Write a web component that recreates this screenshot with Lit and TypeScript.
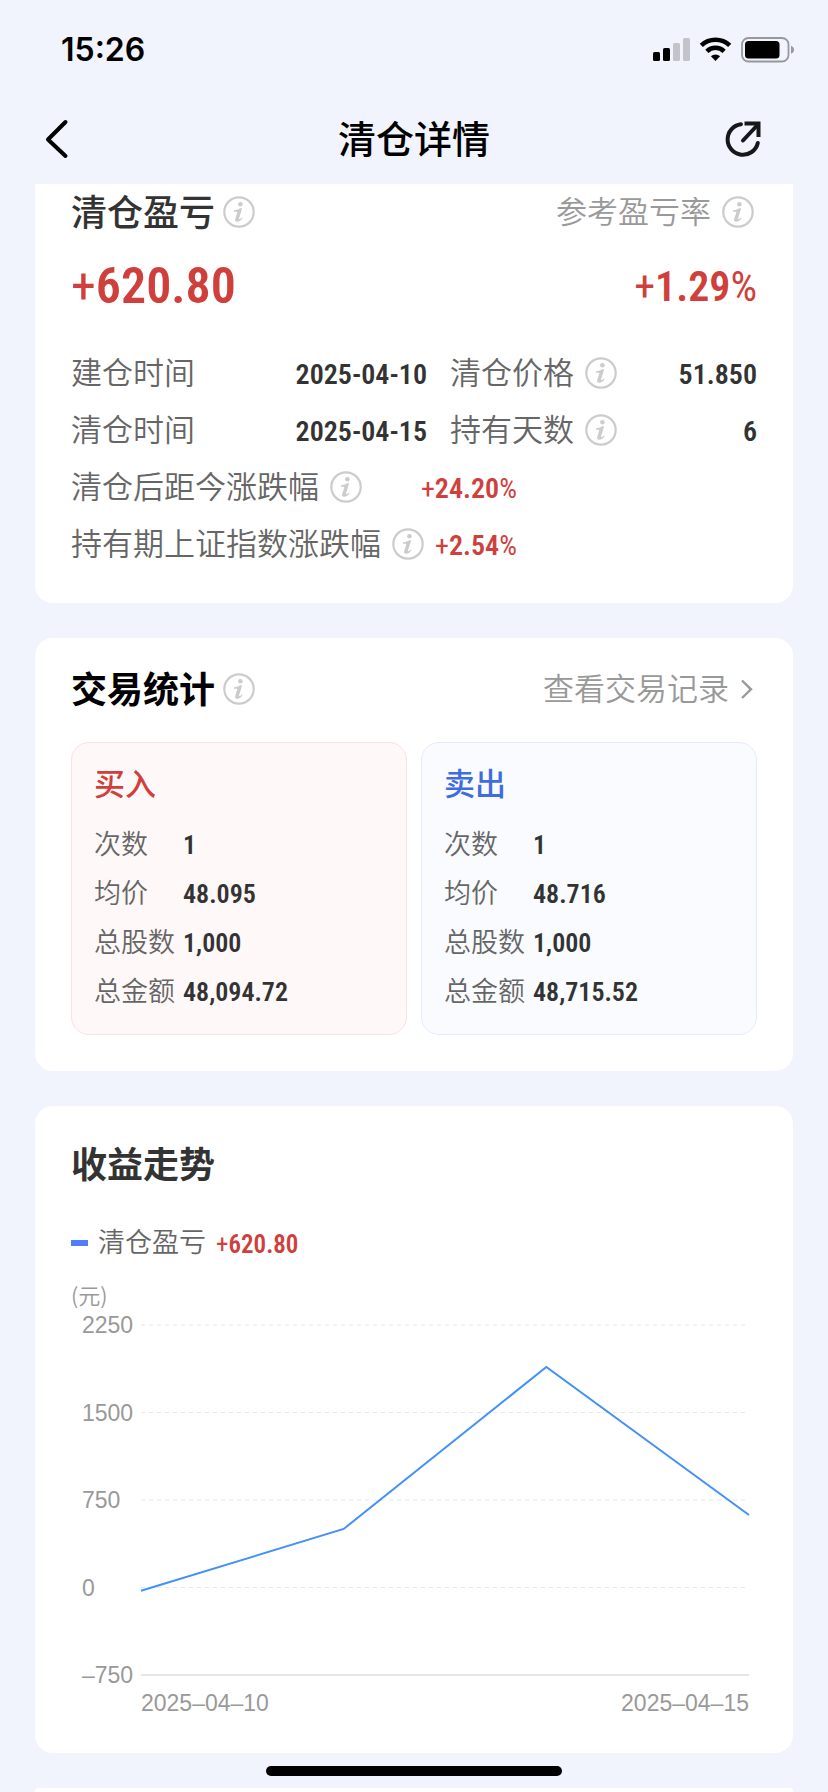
import { LitElement, html, css, svg, nothing } from "lit";
import { customElement, property } from "lit/decorators.js";

type Entry = { label: string; value: string; info?: boolean };

const POSITION_ENTRIES: Entry[] = [
  { label: "建仓时间", value: "2025-04-10" },
  { label: "清仓价格", value: "51.850", info: true },
  { label: "清仓时间", value: "2025-04-15" },
  { label: "持有天数", value: "6", info: true },
];

const CHANGE_ENTRIES: Entry[] = [
  { label: "清仓后距今涨跌幅", value: "+24.20%", info: true },
  { label: "持有期上证指数涨跌幅", value: "+2.54%", info: true },
];

const BUY_ENTRIES: Entry[] = [
  { label: "次数", value: "1" },
  { label: "均价", value: "48.095" },
  { label: "总股数", value: "1,000" },
  { label: "总金额", value: "48,094.72" },
];

const SELL_ENTRIES: Entry[] = [
  { label: "次数", value: "1" },
  { label: "均价", value: "48.716" },
  { label: "总股数", value: "1,000" },
  { label: "总金额", value: "48,715.52" },
];

const CHART_MAX = 2250;
const CHART_MIN = -750;
const CHART_TICKS = [2250, 1500, 750, 0, -750];
const CHART_VALUES = [-28, 502, 1890, 621];

@customElement("info-button")
class InfoButton extends LitElement {
  @property() topic = "";

  static styles = css`
    :host {
      display: flex;
    }
    .info {
      display: flex;
      margin: 0;
      padding: 0;
      border: 0;
      background: none;
      color: #cccccc;
    }
    .icon {
      display: block;
      width: 32px;
      height: 32px;
    }
  `;

  render() {
    return html`
      <button class="info" type="button" aria-label="${this.topic}说明">
        <svg class="icon" viewBox="0 0 32 32" aria-hidden="true">
          <circle cx="16" cy="16" r="14.7" fill="none" stroke="currentColor" stroke-width="2.2" />
          <circle cx="17.4" cy="8.2" r="2.3" fill="currentColor" />
          <path
            d="M11 14.300c2.600-.4 4.800-1.200 7-2.400l1.100.6-3 9.700c-.2.8.1 1.100.7.9.8-.3 1.500-.9 2.100-1.600l.8.6c-1.400 2.200-3.300 3.700-5.600 3.700-1.700 0-2.400-1.100-1.900-2.800l2-6.200c.2-.8 0-1.100-.8-1.100l-2.400.1z"
            fill="currentColor"
          />
        </svg>
      </button>
    `;
  }
}

/** A figure whose plus and percent signs are drawn thinner than its digits. */
@customElement("signed-figure")
class SignedFigure extends LitElement {
  @property() value = "";

  static styles = css`
    .thin {
      font-weight: 400;
    }
  `;

  render() {
    const parts = this.value.split(/([+%])/).filter((part) => part !== "");
    return parts.map((part) =>
      part === "+" || part === "%" ? html`<span class="thin">${part}</span>` : part,
    );
  }
}

@customElement("trade-panel")
class TradePanel extends LitElement {
  @property() heading = "";
  @property({ reflect: true }) kind = "buy";
  @property({ attribute: false }) entries: Entry[] = [];

  static styles = css`
    :host {
      display: block;
      padding: 16px 22px 20px;
      border: 1px solid #fae1e3;
      border-radius: 18px;
      background: #fff8f8;
      color: #cf403c;
    }
    :host([kind="sell"]) {
      border-color: #e5ebfd;
      background: #f9fbff;
      color: #3f6de0;
    }
    .heading {
      margin: 0 0 13px;
      font-size: 31px;
      font-weight: 500;
      line-height: 46px;
    }
    .list {
      display: grid;
      grid-template-columns: 81px 1fr;
      grid-auto-rows: 49px;
      column-gap: 8px;
      align-items: baseline;
      margin: 0;
      line-height: 49px;
    }
    .label {
      color: #666666;
      font-size: 27px;
      font-weight: 350;
      white-space: nowrap;
    }
    .value {
      margin: 0;
      color: #333333;
      font-family: var(--figure-font);
      font-size: 26px;
      font-weight: 600;
    }
  `;

  render() {
    return html`
      <h3 class="heading">${this.heading}</h3>
      <dl class="list">
        ${this.entries.map(
          (entry) => html`
            <dt class="label">${entry.label}</dt>
            <dd class="value">${entry.value}</dd>
          `,
        )}
      </dl>
    `;
  }
}

@customElement("profit-chart")
class ProfitChart extends LitElement {
  static styles = css`
    :host {
      display: block;
      padding: 0 8px 0 11px;
      color: #999999;
      font-family: "Liberation Sans", Arial, sans-serif;
      font-size: 23px;
    }
    .body {
      display: grid;
      grid-template-columns: 59px 1fr;
      height: 380px;
    }
    .ticks {
      display: flex;
      flex-direction: column;
      justify-content: space-between;
      line-height: 30px;
    }
    .area {
      padding: 15px 0;
    }
    .plot {
      display: block;
      width: 100%;
      height: 100%;
      overflow: visible;
    }
    .layer {
      overflow: visible;
    }
    .grid {
      stroke: #e8e8e8;
      stroke-width: 1;
      stroke-dasharray: 4 4;
    }
    .axis {
      stroke: #e6e6e6;
      stroke-width: 2;
    }
    .line {
      fill: none;
      stroke: #4390fa;
      stroke-width: 2;
    }
    .dates {
      display: flex;
      justify-content: space-between;
      padding-left: 59px;
      line-height: 26px;
    }
  `;

  render() {
    const share = (value: number) => ((CHART_MAX - value) / (CHART_MAX - CHART_MIN)) * 100;
    const points = CHART_VALUES.map(
      (value, index) => `${(index / (CHART_VALUES.length - 1)) * 100},${share(value)}`,
    ).join(" ");
    return html`
      <div class="body">
        <div class="ticks">
          ${CHART_TICKS.map((tick) => html`<span>${String(tick).replace("-", "–")}</span>`)}
        </div>
        <div class="area">
          <svg class="plot" role="img" aria-label="收益走势">
            ${CHART_TICKS.map(
              (tick) => svg`<line
                class=${tick === CHART_MIN ? "axis" : "grid"}
                x1="0" x2="100%" y1="${share(tick)}%" y2="${share(tick)}%" />`,
            )}
            <svg class="layer" viewBox="0 0 100 100" width="100%" height="100%" preserveAspectRatio="none">
              <polyline class="line" points=${points} vector-effect="non-scaling-stroke" />
            </svg>
          </svg>
        </div>
      </div>
      <div class="dates"><span>2025–04–10</span><span>2025–04–15</span></div>
    `;
  }
}

@customElement("app-root")
class AppRoot extends LitElement {
  static styles = css`
    :host {
      --figure-font: "Roboto Condensed", Roboto, sans-serif;
      --red: #cf403c;
      display: flex;
      flex-direction: column;
      min-height: 100vh;
      background: #f1f4fd;
      color: #333333;
      font-family: "Noto Sans CJK SC", sans-serif;
    }
    .status {
      display: flex;
      align-items: center;
      justify-content: space-between;
      height: 100px;
      padding: 0 34px 0 61px;
      color: #000000;
    }
    .time {
      font-family: Inter, sans-serif;
      font-size: 32px;
      font-weight: 600;
      line-height: 40px;
    }
    .system {
      display: block;
      width: 142px;
      height: 26px;
    }
    .nav {
      display: grid;
      grid-template-columns: 1fr auto 1fr;
      align-items: center;
      height: 84px;
      padding: 0 66px 6px 44px;
      box-sizing: border-box;
      color: #000000;
    }
    .title {
      grid-column: 2;
      margin: 0 0 0 22px;
      padding-bottom: 4px;
      font-size: 38px;
      font-weight: 500;
      line-height: 52px;
    }
    .icon-button {
      display: flex;
      padding: 0;
      border: 0;
      background: none;
      color: inherit;
    }
    .share {
      justify-self: end;
    }
    .back-icon {
      width: 26px;
      height: 40px;
    }
    .share-icon {
      width: 38px;
      height: 38px;
    }
    .content {
      display: flex;
      flex: 1;
      flex-direction: column;
      gap: 35px;
      padding: 0 35px;
    }
    .card {
      padding: 26px 36px 36px;
      border-radius: 18px;
      background: #ffffff;
    }
    .card-profit {
      padding: 0 36px 31px;
      border-radius: 0 0 18px 18px;
    }
    .card-trend {
      padding: 33px 36px 37px;
    }
    .card-next {
      flex: 1;
      padding: 0;
      border-radius: 18px 18px 0 0;
    }
    .head {
      display: flex;
      align-items: center;
      justify-content: space-between;
    }
    .head-profit {
      height: 56px;
      padding-right: 3px;
    }
    .head-trades {
      height: 50px;
      margin-bottom: 28px;
    }
    .heading {
      margin: 0;
      padding-bottom: 4px;
      font-size: 36px;
      font-weight: 500;
      line-height: 46px;
    }
    .heading-dark {
      color: #000000;
      font-weight: 700;
    }
    .heading-bold {
      font-weight: 700;
    }
    .with-info {
      display: flex;
      align-items: center;
      gap: 8px;
      white-space: nowrap;
    }
    .label {
      gap: 11px;
    }
    .text {
      padding-bottom: 4px;
      font-size: 31px;
      font-weight: 350;
      line-height: 46px;
    }
    .side {
      color: #999999;
    }
    .totals {
      display: flex;
      align-items: center;
      justify-content: space-between;
      height: 92px;
      margin-bottom: 12px;
      color: var(--red);
      font-family: var(--figure-font);
      font-weight: 600;
    }
    .total {
      font-size: 50px;
    }
    .rate {
      font-size: 42px;
    }
    .facts {
      display: grid;
      grid-template-columns: 356fr 307fr;
      column-gap: 23px;
      margin: 0;
    }
    .changes {
      width: 65%;
      margin: 0;
    }
    .fact {
      display: flex;
      align-items: center;
      justify-content: space-between;
      height: 57px;
      color: #666666;
    }
    .value {
      margin: 0;
      padding-top: 3px;
      color: #333333;
      font-family: var(--figure-font);
      font-size: 28px;
      font-weight: 600;
      white-space: nowrap;
    }
    .value-up {
      color: var(--red);
    }
    .records {
      display: flex;
      align-items: center;
      gap: 8px;
      color: #999999;
      text-decoration: none;
    }
    .chevron {
      width: 20px;
      height: 24px;
    }
    .panels {
      display: grid;
      grid-template-columns: 1fr 1fr;
      gap: 14px;
    }
    .legend {
      display: flex;
      align-items: center;
      gap: 10px;
      height: 40px;
      margin: 34px 0 17px;
      color: #666666;
    }
    .mark {
      width: 17px;
      height: 6px;
      background: #4f7ef7;
    }
    .legend-text {
      padding-bottom: 4px;
      font-size: 27px;
      font-weight: 350;
      line-height: 36px;
    }
    .legend-value {
      padding-top: 3px;
      color: var(--red);
      font-family: var(--figure-font);
      font-size: 25px;
      font-weight: 600;
    }
    .unit {
      margin: 0;
      padding-bottom: 2px;
      color: #999999;
      font-size: 22px;
      font-weight: 350;
      line-height: 28px;
    }
    .home-bar {
      position: fixed;
      bottom: 16px;
      left: 50%;
      width: 296px;
      height: 10px;
      margin-left: -148px;
      border-radius: 5px;
      background: #000000;
    }
  `;

  private fact(entry: Entry) {
    const up = entry.value.startsWith("+");
    return html`
      <div class="fact">
        <dt class="with-info label">
          <span class="text">${entry.label}</span>
          ${entry.info ? html`<info-button topic=${entry.label}></info-button>` : nothing}
        </dt>
        <dd class="value ${up ? "value-up" : ""}"><signed-figure value=${entry.value}></signed-figure></dd>
      </div>
    `;
  }

  render() {
    return html`
      <div class="status">
        <span class="time">15:26</span>
        <svg class="system" viewBox="0 0 142 26" aria-hidden="true">
          <rect x="1" y="15" width="7" height="9" rx="1.5" />
          <rect x="11" y="11" width="7" height="13" rx="1.5" />
          <rect x="21" y="6" width="7" height="18" rx="1.5" fill="#c3c4c9" />
          <rect x="31" y="1" width="7" height="23" rx="1.5" fill="#c3c4c9" />
          <g fill="none" stroke="#000000" stroke-width="4.6">
            <path d="M49.3 8.4a20.5 20.5 0 0 1 28.4 0" />
            <path d="M54.9 14.3a12.3 12.3 0 0 1 17.2 0" />
          </g>
          <path d="M63.5 24l-4.600-4.700a6.700 6.700 0 0 1 9.200 0z" />
          <rect x="90" y="1" width="46.5" height="23.5" rx="6.5" fill="none" stroke="#97989d" stroke-width="1.8" />
          <rect x="93" y="4" width="34.5" height="17.5" rx="3.5" />
          <path d="M139 8.800c2 .8 3 2.200 3 4s-1 3.200-3 4z" fill="#97989d" />
        </svg>
      </div>

      <header class="nav">
        <button class="icon-button" type="button" aria-label="返回">
          <svg class="back-icon" viewBox="0 0 26 40" aria-hidden="true">
            <path d="M21.5 3L4 20.5 21.5 37" fill="none" stroke="currentColor" stroke-width="4" stroke-linecap="round" stroke-linejoin="round" />
          </svg>
        </button>
        <h1 class="title">清仓详情</h1>
        <button class="icon-button share" type="button" aria-label="分享">
          <svg class="share-icon" viewBox="0 0 38 38" fill="none" stroke="#16171a" stroke-width="4" aria-hidden="true">
            <path d="M17 4.300A15.300 15.300 0 1 0 33.800 23" stroke-linecap="round" />
            <path d="M19 20.500L33.500 5" stroke-linecap="round" />
            <path d="M20.500 3.500h14V17" />
          </svg>
        </button>
      </header>

      <main class="content">
        <section class="card card-profit">
          <div class="head head-profit">
            <div class="with-info">
              <h2 class="heading">清仓盈亏</h2>
              <info-button topic="清仓盈亏"></info-button>
            </div>
            <div class="with-info label side">
              <span class="text">参考盈亏率</span>
              <info-button topic="参考盈亏率"></info-button>
            </div>
          </div>
          <div class="totals">
            <signed-figure class="total" value="+620.80"></signed-figure>
            <signed-figure class="rate" value="+1.29%"></signed-figure>
          </div>
          <dl class="facts">${POSITION_ENTRIES.map((entry) => this.fact(entry))}</dl>
          <dl class="changes">${CHANGE_ENTRIES.map((entry) => this.fact(entry))}</dl>
        </section>

        <section class="card">
          <div class="head head-trades">
            <div class="with-info">
              <h2 class="heading heading-dark">交易统计</h2>
              <info-button topic="交易统计"></info-button>
            </div>
            <a class="records" href="#records">
              <span class="text">查看交易记录</span>
              <svg class="chevron" viewBox="0 0 20 24" aria-hidden="true">
                <path d="M5 3.500l9 8.800-9 8.700" fill="none" stroke="currentColor" stroke-width="2.400" />
              </svg>
            </a>
          </div>
          <div class="panels">
            <trade-panel heading="买入" kind="buy" .entries=${BUY_ENTRIES}></trade-panel>
            <trade-panel heading="卖出" kind="sell" .entries=${SELL_ENTRIES}></trade-panel>
          </div>
        </section>

        <section class="card card-trend">
          <h2 class="heading heading-bold">收益走势</h2>
          <div class="legend">
            <span class="mark"></span>
            <span class="legend-text">清仓盈亏</span>
            <signed-figure class="legend-value" value="+620.80"></signed-figure>
          </div>
          <p class="unit">(元)</p>
          <profit-chart></profit-chart>
        </section>

        <section class="card card-next"></section>
      </main>

      <div class="home-bar"></div>
    `;
  }
}
